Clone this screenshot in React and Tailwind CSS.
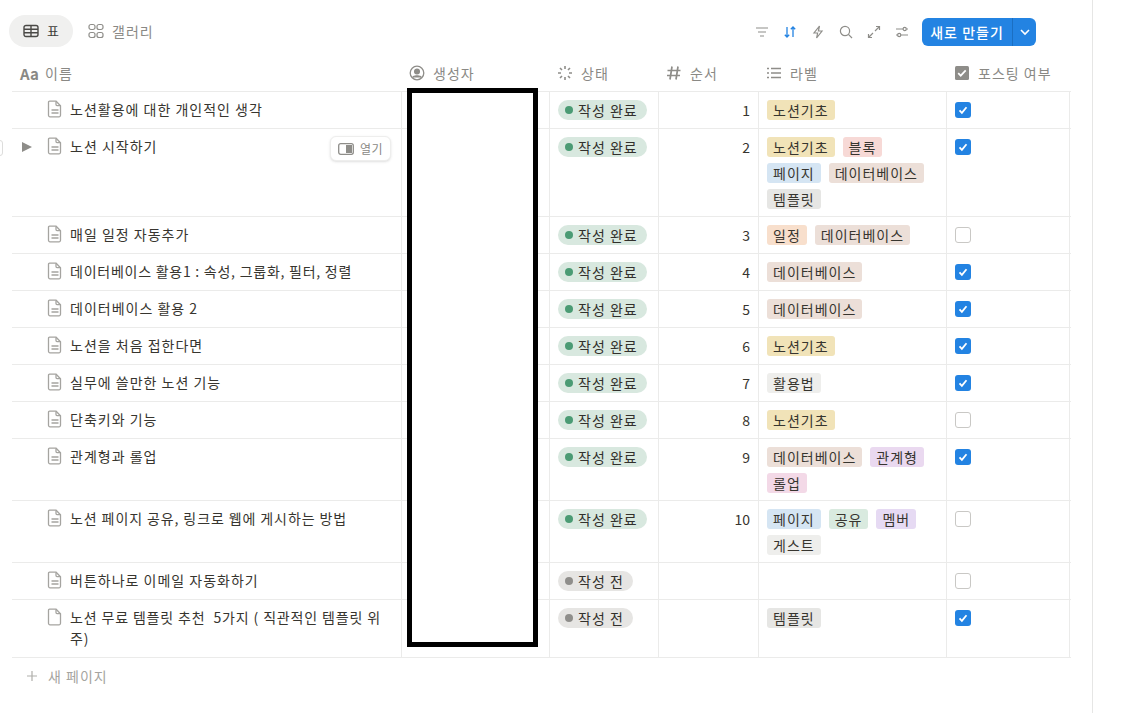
import React from "react";

const tagColors = {
  "노션기초": "bg-[#f1e3b8]",
  "블록": "bg-[#f7d9d6]",
  "페이지": "bg-[#d5e5f3]",
  "데이터베이스": "bg-[#ecdfd8]",
  "템플릿": "bg-[#e6e6e4]",
  "일정": "bg-[#f8dfcc]",
  "활용법": "bg-[#eeeeec]",
  "관계형": "bg-[#ead9f0]",
  "롤업": "bg-[#f3d9e7]",
  "공유": "bg-[#d9eadf]",
  "멤버": "bg-[#e6daf3]",
  "게스트": "bg-[#eeeeec]",
};

const rows = [
  { t: "노션활용에 대한 개인적인 생각", s: 1, n: 1, l: ["노션기초"], c: true, h: "h-[37px]" },
  { t: "노션 시작하기", s: 1, n: 2, l: ["노션기초", "블록", "페이지", "데이터베이스", "템플릿"], c: true, h: "h-[88px]", hover: true },
  { t: "매일 일정 자동추가", s: 1, n: 3, l: ["일정", "데이터베이스"], c: false, h: "h-[37px]" },
  { t: "데이터베이스 활용1 : 속성, 그룹화, 필터, 정렬", s: 1, n: 4, l: ["데이터베이스"], c: true, h: "h-[37px]", tight: "tracking-[0.75px]" },
  { t: "데이터베이스 활용 2", s: 1, n: 5, l: ["데이터베이스"], c: true, h: "h-[37px]" },
  { t: "노션을 처음 접한다면", s: 1, n: 6, l: ["노션기초"], c: true, h: "h-[37px]" },
  { t: "실무에 쓸만한 노션 기능", s: 1, n: 7, l: ["활용법"], c: true, h: "h-[37px]" },
  { t: "단축키와 기능", s: 1, n: 8, l: ["노션기초"], c: false, h: "h-[37px]" },
  { t: "관계형과 롤업", s: 1, n: 9, l: ["데이터베이스", "관계형", "롤업"], c: true, h: "h-[62px]" },
  { t: "노션 페이지 공유, 링크로 웹에 게시하는 방법", s: 1, n: 10, l: ["페이지", "공유", "멤버", "게스트"], c: false, h: "h-[62px]", tight: "tracking-[0.9px]" },
  { t: "버튼하나로 이메일 자동화하기", s: 0, l: [], c: false, h: "h-[37px]" },
  { t: "노션 무료 템플릿 추천  5가지 ( 직관적인 템플릿 위주)", s: 0, l: ["템플릿"], c: true, h: "h-[58px]", empty: true, tight: "tracking-[0.85px]" },
];

function Doc({ empty }) {
  return (
    <svg width="16" height="18" viewBox="0 0 16 18" fill="none" stroke="#a5a4a0" strokeWidth="1.3" className="shrink-0">
      <path d="M2.5 1.2h6.6l4.4 4.5v9.6a1.5 1.5 0 0 1-1.5 1.5H3a1.5 1.5 0 0 1-1.5-1.5V2.2a1 1 0 0 1 1-1z" />
      <path d="M9 1.4v3.2a1 1 0 0 0 1 1h3.4" />
      {!empty && <path d="M4.5 10h7M4.5 13h7" />}
    </svg>
  );
}

function Check({ on }) {
  if (!on) return <div className="w-4 h-4 rounded-[3px] border border-[#c9c8c5] bg-white" />;
  return (
    <div className="w-4 h-4 rounded-[3px] bg-[#2383e2] flex items-center justify-center">
      <svg width="12" height="12" viewBox="0 0 12 12" fill="none" stroke="#fff" strokeWidth="1.8">
        <path d="M2.5 6.3l2.4 2.5 4.6-5.6" />
      </svg>
    </div>
  );
}

function Status({ done }) {
  return (
    <div className={`flex w-fit items-center h-5 pl-[7px] pr-[9px] rounded-full text-[14px] leading-5 text-[#32302c] ${done ? "bg-[#d8e8df]" : "bg-[#e6e5e3]"}`}>
      <span className={`w-2 h-2 rounded-full mr-[5px] ${done ? "bg-[#4b9b74]" : "bg-[#8f8e8b]"}`} />
      {done ? "작성 완료" : "작성 전"}
    </div>
  );
}

function HeaderCell({ w, icon, label }) {
  return (
    <div className={`${w} shrink-0 flex items-center h-full pl-2`}>
      <span className="flex items-center justify-center w-4 h-4 mr-[8px] shrink-0">{icon}</span>
      <span className="text-[14px] text-[#8a8985] whitespace-nowrap">{label}</span>
    </div>
  );
}

export default function App() {
  const cell = "shrink-0 border-l border-[#ebebea]";
  return (
    <div
      className="relative w-[1122px] h-[713px] overflow-hidden bg-white tracking-[1px]"
      style={{ fontFamily: '"Noto Sans CJK KR", "Noto Sans", sans-serif' }}
    >
      <div className="absolute left-[1092px] top-0 bottom-0 w-px bg-[#e6e6e5]" />

      {/* toolbar */}
      <div className="flex items-center justify-between h-[32px] mt-[15px] ml-[9px] w-[1027px]">
        <div className="flex items-center">
          <div className="flex items-center h-[32px] w-[64px] pl-[14px] rounded-full bg-[#f0f0ef]">
            <svg width="16" height="14" viewBox="0 0 16 14" fill="none" stroke="#4a4946" strokeWidth="1.4">
              <rect x="1" y="1.5" width="14" height="11" rx="2" />
              <path d="M1 5.2h14M1 8.8h14M8 1.5v11" />
            </svg>
            <span className="ml-[8px] text-[13px] text-[#3d3c39]">표</span>
          </div>
          <div className="flex items-center ml-[15px]">
            <svg width="16" height="16" viewBox="0 0 16 16" fill="none" stroke="#8e8d89" strokeWidth="1.2">
              <rect x="1" y="1.5" width="6" height="5" rx="2" />
              <rect x="9" y="1.5" width="6" height="5" rx="2" />
              <rect x="1" y="9.5" width="6" height="5" rx="2" />
              <rect x="9" y="9.5" width="6" height="5" rx="2" />
            </svg>
            <span className="ml-[8px] text-[14px] text-[#8a8985]">갤러리</span>
          </div>
        </div>
        <div className="flex items-center mt-[2px]">
          <div className="flex items-center gap-[14px] mr-[13px]">
            <svg width="14" height="14" viewBox="0 0 14 14" fill="none" stroke="#8e8d89" strokeWidth="1.2"><path d="M1 3h12M3 7h8M5 11h4" /></svg>
            <svg width="14" height="14" viewBox="0 0 14 14" fill="none" stroke="#2383e2" strokeWidth="1.3"><path d="M4 2v10M1.8 9.8L4 12l2.2-2.2M10 12V2M7.8 4.2L10 2l2.2 2.2" /></svg>
            <svg width="14" height="14" viewBox="0 0 14 14" fill="none" stroke="#8e8d89" strokeWidth="1.2"><path d="M8.5 1L3 8h3.6l-1 5L11 6H7.4z" /></svg>
            <svg width="14" height="14" viewBox="0 0 14 14" fill="none" stroke="#8e8d89" strokeWidth="1.2"><circle cx="6" cy="6" r="4.6" /><path d="M9.4 9.4L13 13" /></svg>
            <svg width="14" height="14" viewBox="0 0 14 14" fill="none" stroke="#8e8d89" strokeWidth="1.2"><path d="M8 6l4.5-4.5M9 1.5h3.5V5M6 8l-4.5 4.5M5 12.5H1.5V9" /></svg>
            <svg width="14" height="14" viewBox="0 0 14 14" fill="none" stroke="#8e8d89" strokeWidth="1.2"><path d="M1 4h7M11.5 4H13M1 10h1.5M6 10h7" /><circle cx="9.7" cy="4" r="1.6" /><circle cx="4.2" cy="10" r="1.6" /></svg>
          </div>
          <div className="flex items-center h-[28px] w-[114px] rounded-[6px] bg-[#2383e2] text-white">
            <span className="w-[90px] text-center text-[14px] font-medium leading-[28px] whitespace-nowrap">새로 만들기</span>
            <span className="w-px h-full bg-[#1b6fc2]" />
            <span className="flex-1 flex justify-center">
              <svg width="12" height="12" viewBox="0 0 12 12" fill="none" stroke="#fff" strokeWidth="1.6"><path d="M2 4l4 4 4-4" /></svg>
            </span>
          </div>
        </div>
      </div>

      {/* table */}
      <div className="mt-[8px] ml-[12px] w-[1059px]">
        <div className="flex h-[37px] border-b border-[#ebebea]">
          <div className="w-[389px] shrink-0 flex items-center pl-[8px]">
            <span className="w-[18px] mr-[7px] text-[15px] font-semibold text-[#8a8985] leading-none tracking-normal">Aa</span>
            <span className="text-[14px] text-[#8a8985]">이름</span>
          </div>
          <HeaderCell w="w-[148px]" label="생성자" icon={
            <svg width="16" height="16" viewBox="0 0 16 16" fill="none" stroke="#8e8d89" strokeWidth="1.3"><circle cx="8" cy="8" r="6.8" /><circle cx="8" cy="6.5" r="2.4" fill="#8e8d89" /><path d="M3.5 12.5c1-2.2 8-2.2 9 0" fill="#8e8d89" /></svg>
          } />
          <HeaderCell w="w-[109px]" label="상태" icon={
            <svg width="16" height="16" viewBox="0 0 16 16" fill="none" stroke="#8e8d89" strokeWidth="1.6"><path d="M8 1v3M8 12v3M1 8h3M12 8h3M3 3l2 2M11 11l2 2M13 3l-2 2M5 11l-2 2" /></svg>
          } />
          <HeaderCell w="w-[100px]" label="순서" icon={
            <svg width="16" height="16" viewBox="0 0 16 16" fill="none" stroke="#8e8d89" strokeWidth="1.7"><path d="M6 1.5L4 14.5M12 1.5l-2 13M1.5 5.5h13M1 10.5h13" /></svg>
          } />
          <HeaderCell w="w-[188px]" label="라벨" icon={
            <svg width="16" height="16" viewBox="0 0 16 16" fill="none" stroke="#8e8d89" strokeWidth="1.4"><path d="M5 3.5h10M5 8h10M5 12.5h10M1 3.5h2M1 8h2M1 12.5h2" /></svg>
          } />
          <HeaderCell w="w-[125px]" label="포스팅 여부" icon={
            <svg width="14" height="14" viewBox="0 0 14 14"><rect width="14" height="14" rx="1.5" fill="#8e8d89" /><path d="M3.2 7.2l2.5 2.5 5-5.4" fill="none" stroke="#fff" strokeWidth="1.7" /></svg>
          } />
        </div>

        {rows.map((r) => (
          <div key={r.t} className={`flex ${r.h} border-b border-[#ebebea]`}>
            <div className="relative w-[389px] shrink-0 flex items-start pl-[35px] pr-[14px] pt-[8px]">
              {r.hover && (
                <>
                  <div className="absolute left-[-20px] top-[11px] w-[11px] h-[16px] rounded-[3px] border border-[#dddddc] bg-white" />
                  <svg width="10" height="10" viewBox="0 0 10 10" className="absolute left-[10px] top-[13px]"><path d="M0 0l10 5-10 5z" fill="#8e8d89" /></svg>
                </>
              )}
              <Doc empty={r.empty} />
              <span className={`ml-[7px] text-[14px] leading-[21px] text-[#37352f] whitespace-pre-wrap -mt-[1px] ${r.tight || ""}`}>{r.t}</span>
              {r.hover && (
                <div className="absolute right-[10px] top-[7px] flex items-center h-[25px] px-[7px] rounded-[6px] bg-white border border-[#eeeeed] shadow-sm">
                  <svg width="16" height="12" viewBox="0 0 16 12"><rect x="0.7" y="0.7" width="14.6" height="10.6" rx="2" fill="none" stroke="#8e8d89" strokeWidth="1.3" /><rect x="8" y="2" width="6" height="8" fill="#8e8d89" /></svg>
                  <span className="ml-[6px] text-[12px] tracking-[0.5px] text-[#8a8985]">열기</span>
                </div>
              )}
            </div>
            <div className={`${cell} w-[148px]`} />
            <div className={`${cell} w-[109px] pl-[8px] pt-[8px]`}>
              <Status done={r.s === 1} />
            </div>
            <div className={`${cell} w-[100px] pr-[8px] pt-[8px] text-right text-[14px] leading-[21px] text-[#37352f] tracking-normal`}>{r.n}</div>
            <div className={`${cell} w-[188px] pl-[8px] pr-[12px] pt-[8px] flex flex-wrap content-start gap-x-[8px] gap-y-[6px]`}>
              {r.l.map((x) => (
                <span key={x} className={`h-5 px-[6px] rounded-[3px] text-[14px] leading-5 text-[#37352f] whitespace-nowrap ${tagColors[x]}`}>{x}</span>
              ))}
            </div>
            <div className={`${cell} w-[123px] pl-[8px] pt-[10px]`}>
              <Check on={r.c} />
            </div>
            <div className={`${cell} w-[2px]`} />
          </div>
        ))}

        <div className="flex items-center h-[36px] pl-[14px]">
          <svg width="12" height="12" viewBox="0 0 12 12" fill="none" stroke="#b0afab" strokeWidth="1.2"><path d="M6 1v10M1 6h10" /></svg>
          <span className="ml-[10px] text-[14px] text-[#a5a4a0]">새 페이지</span>
        </div>
      </div>

      {/* redaction box */}
      <div className="absolute left-[407px] top-[88px] w-[131px] h-[559px] border-[5px] border-black bg-white" />
    </div>
  );
}
